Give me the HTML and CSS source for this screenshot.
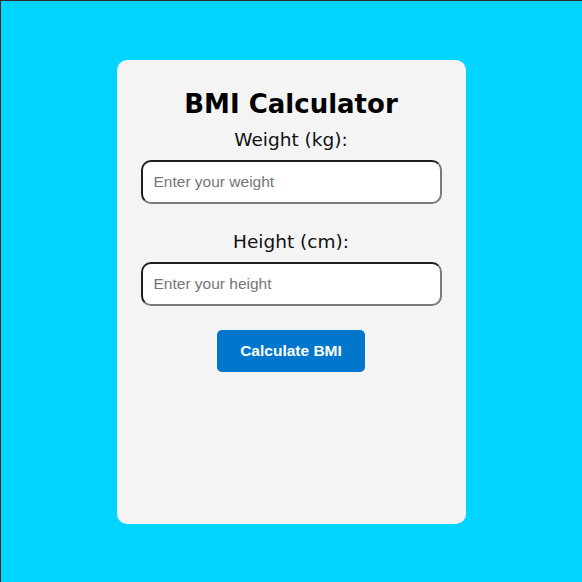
FILE: index.html
```html
<!DOCTYPE html>
<html lang="en">
<head>
<meta charset="utf-8">
<title>BMI Calculator</title>
<link rel="stylesheet" href="styles.css">
</head>
<body>
<div class="card">
  <h1 class="title">BMI Calculator</h1>
  <label class="label" for="weight">Weight (kg):</label>
  <input class="field" id="weight" type="number" placeholder="Enter your weight">
  <label class="label label-second" for="height">Height (cm):</label>
  <input class="field" id="height" type="number" placeholder="Enter your height">
  <button class="btn" type="button">Calculate BMI</button>
</div>
</body>
</html>
```

FILE: styles.css
```css
html, body {
  margin: 0;
  padding: 0;
}
body {
  box-sizing: border-box;
  height: 582px;
  background: #00d4ff;
  border-top: 1px solid #2a2a2a;
  border-left: 1px solid #2a2a2a;
  display: flex;
  justify-content: center;
  align-items: flex-start;
}
.card {
  box-sizing: border-box;
  margin-top: 59px;
  width: 349px;
  height: 464px;
  margin-left: -1px;
  background: #f4f4f4;
  border-radius: 10px;
  padding: 27px 24px 24px;
  display: flex;
  flex-direction: column;
  align-items: center;
}
.title {
  margin: 0 0 7px;
  font-family: "DejaVu Sans", sans-serif;
  font-weight: 700;
  font-size: 26px;
  line-height: 34px;
  color: #000;
}
.label {
  font-family: "DejaVu Sans", sans-serif;
  font-size: 18.5px;
  line-height: 24px;
  color: #111;
  margin-bottom: 8px;
}
.label-second {
  margin-top: 26px;
}
.field {
  box-sizing: border-box;
  width: 301px;
  height: 44px;
  margin: 0;
  padding: 0 11px;
  border-radius: 10px;
  border-width: 2px;
  border-style: solid;
  border-color: #1e1e1e #7a7a7a #7a7a7a #1e1e1e;
  background: #fff;
  font-family: "Liberation Sans", Arial, sans-serif;
  font-size: 15.5px;
  color: #222;
  outline: none;
}
.field::placeholder {
  color: #757575;
}
.btn {
  margin-top: 24px;
  width: 148px;
  height: 42px;
  border: none;
  border-radius: 5px;
  background: #0077cc;
  color: #fff;
  font-family: "Liberation Sans", Arial, sans-serif;
  font-weight: 700;
  font-size: 15.5px;
  cursor: pointer;
}
```
